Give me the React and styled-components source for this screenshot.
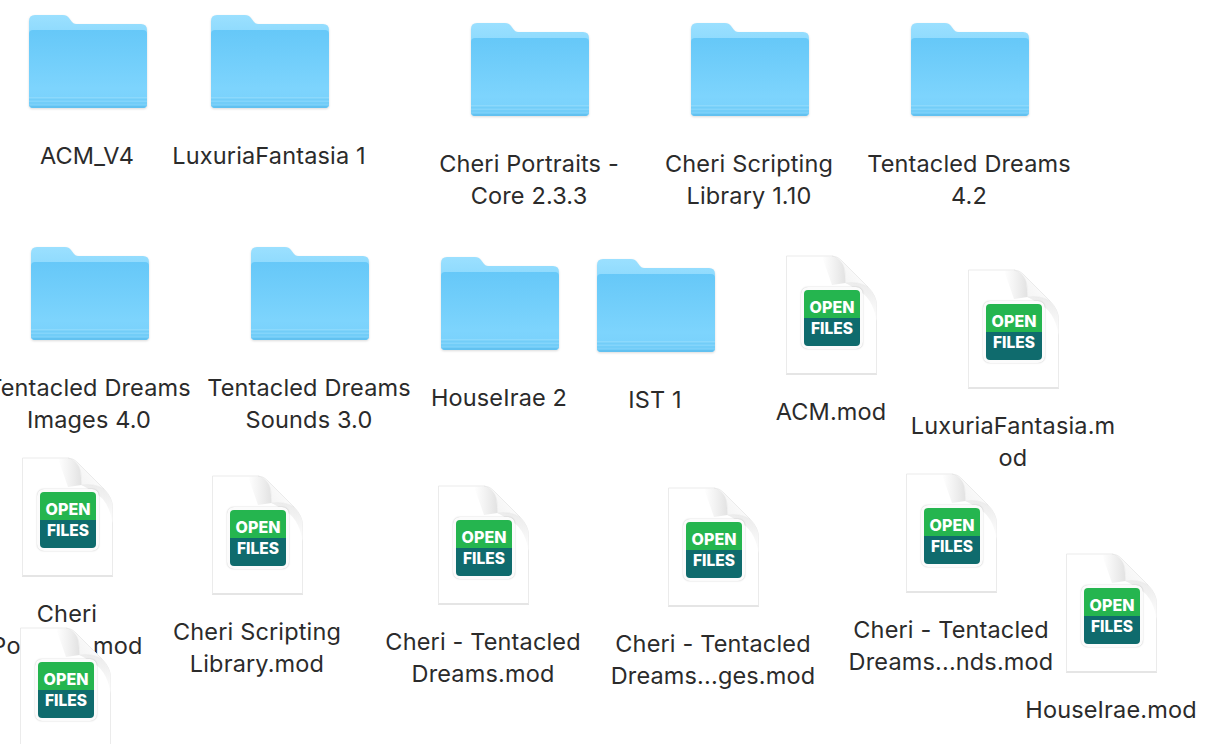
import React from 'react';
import styled, {createGlobalStyle} from 'styled-components';

const GlobalStyle = createGlobalStyle`
    html, body {
        margin: 0;
        padding: 0;
        background: #fff;
    }
`;

const Desktop = styled.main`
    position: relative;
    width: 1212px;
    height: 744px;
    overflow: hidden;
    background: #fff;
    font-family: Inter, "Liberation Sans", sans-serif;
`;
const Item = styled.div`
    position: absolute;
    left: ${({$center}) => $center - 130}px;
    top: ${({$top}) => $top}px;
    width: 260px;
    display: flex;
    flex-direction: column;
    align-items: center;
`;
const Label = styled.div`
    margin-top: ${({$gap}) => $gap}px;
    margin-right: ${({$shift}) => $shift}px;
    font-size: 23.5px;
    line-height: 32px;
    letter-spacing: 0.15px;
    color: #2b2b2b;
    text-align: center;
    white-space: nowrap;
`;
const FolderSvg = styled.svg`
    display: block;
    width: 118px;
    height: 94px;
    overflow: visible;
    filter: drop-shadow(0 1px 1px rgba(0, 0, 0, 0.14));
`;
const FileBox = styled.div`
    position: relative;
    width: 92px;
    height: 120px;
`;
const FileSvg = styled.svg`
    display: block;
    width: 92px;
    height: 120px;
    overflow: visible;
`;
const Badge = styled.div`
    position: absolute;
    left: 15px;
    top: 32px;
    width: 62px;
    height: 62px;
    box-sizing: border-box;
    padding: 3px;
    border-radius: 7px;
    background: #fbfbfb;
    box-shadow: 0 0 1.5px rgba(0, 0, 0, 0.25);
`;
const BadgeInner = styled.div`
    height: 100%;
    border-radius: 4px;
    overflow: hidden;
    display: grid;
    grid-template-rows: 1fr 1fr;
    font-weight: 800;
    color: #fff;
    text-align: center;
`;
const BadgeRow = styled.div`
    display: flex;
    justify-content: center;
    align-items: ${({$align}) => $align};
    padding: ${({$pad}) => $pad};
    background: ${({$bg}) => $bg};
    font-size: ${({$size}) => $size}px;
    line-height: 12px;
`;
const Defs = styled.svg`
    position: absolute;
    width: 0;
    height: 0;
`;

const SharedDefs = () => (
    <Defs aria-hidden="true">
        <defs>
            <linearGradient id="folderBack" x1="0" y1="0" x2="0" y2="1">
                <stop offset="0" stopColor="#9be0ff" />
                <stop offset="1" stopColor="#7fd3fb" />
            </linearGradient>
            <linearGradient id="folderFront" x1="0" y1="0" x2="0" y2="1">
                <stop offset="0" stopColor="#66c8f8" />
                <stop offset="0.75" stopColor="#7dd4fd" />
                <stop offset="1" stopColor="#78d0fb" />
            </linearGradient>
            <linearGradient id="fold" x1="0" y1="0.8" x2="1" y2="0.2">
                <stop offset="0" stopColor="#f1f1f1" />
                <stop offset="1" stopColor="#ffffff" />
            </linearGradient>
            <linearGradient id="pageShade" x1="0" y1="0" x2="1" y2="0">
                <stop offset="0" stopColor="#e6e6e6" stopOpacity="0" />
                <stop offset="1" stopColor="#e2e2e2" />
            </linearGradient>
            <linearGradient id="curl" x1="0.2" y1="0" x2="0.1" y2="1">
                <stop offset="0" stopColor="#ececec" />
                <stop offset="1" stopColor="#ffffff" />
            </linearGradient>
        </defs>
    </Defs>
);

const FolderIcon = () => (
    <FolderSvg viewBox="0 0 118 94">
        <path
            d="M0 6 Q0 0 6 0 H34 Q38 0 40 3 L43 7 Q44.500 9 47 9 H112 Q118 9 118 15 V40 H0 Z"
            fill="url(#folderBack)"
        />
        <path
            d="M0 89 V19 Q0 15 4 15 H114 Q118 15 118 19 V89 Q118 93 114 93 H4 Q0 93 0 89 Z"
            fill="url(#folderFront)"
        />
        <path d="M0 82 H118 V89 Q118 93 114 93 H4 Q0 93 0 89 Z" fill="#72cdf8" />
        <rect x="0" y="82" width="118" height="1.500" fill="#8cd9fc" />
        <rect x="0" y="85.500" width="118" height="1.500" fill="#84d5fb" />
        <rect x="0" y="89" width="118" height="1" fill="#7cd0f9" />
        <path d="M1 91 H117 Q116 93 114 93 H4 Q2 93 1 91 Z" fill="#62c1f0" />
    </FolderSvg>
);

const FileIcon = () => (
    <FileBox>
        <FileSvg viewBox="0 0 92 120">
            <path
                d="M0.500 1 H46 Q52 1.500 56 6 L82 32 Q90.500 41 90.500 50 V118.500 H0.500 Z"
                fill="#fff"
                stroke="#e6e6e6"
                strokeWidth="0.8"
            />
            <path d="M0 118.800 H91 V120 H0 Z" fill="#000" opacity="0.1" />
            <path d="M36 1.500 H46 Q57 4 58.500 14 L59.500 28 L46 30 Z" fill="url(#pageShade)" />
            <path
                d="M59.500 28 Q72 26 82 32 Q90.500 41 90.500 50 V66 Q87 42 70 34 Q65 31 59.500 28 Z"
                fill="url(#curl)"
            />
            <path
                d="M46 1 Q52 1.500 56 6 L82 32 Q72 26 59.500 28 Q60 16 57 10 Q53 3 46 1 Z"
                fill="url(#fold)"
                stroke="#e4e4e4"
                strokeWidth="0.5"
            />
        </FileSvg>
        <Badge>
            <BadgeInner>
                <BadgeRow $bg="#25b54f" $size={16} $align="flex-end" $pad="0 0 5px">OPEN</BadgeRow>
                <BadgeRow $bg="#0f6b6d" $size={15.5} $align="flex-start" $pad="5px 0 0">FILES</BadgeRow>
            </BadgeInner>
        </Badge>
    </FileBox>
);

const folders = [
    {center: 88, top: 15, lines: ['ACM_V4']},
    {center: 270, top: 15, lines: ['LuxuriaFantasia 1']},
    {center: 530, top: 23, lines: ['Cheri Portraits -', 'Core 2.3.3']},
    {center: 750, top: 23, lines: ['Cheri Scripting', 'Library 1.10']},
    {center: 970, top: 23, lines: ['Tentacled Dreams', '4.2']},
    {center: 90, top: 247, lines: ['Tentacled Dreams', 'Images 4.0']},
    {center: 310, top: 247, lines: ['Tentacled Dreams', 'Sounds 3.0']},
    {center: 500, top: 257, lines: ['HouseIrae 2']},
    {center: 656, top: 259, lines: ['IST 1']},
];

const files = [
    {center: 833, top: 255, lines: ['ACM.mod']},
    {center: 1015, top: 269, lines: ['LuxuriaFantasia.m', 'od']},
    {center: 69, top: 457, lines: ['Cheri', 'Portraits.mod']},
    {center: 259, top: 475, lines: ['Cheri Scripting', 'Library.mod']},
    {center: 485, top: 485, lines: ['Cheri - Tentacled', 'Dreams.mod']},
    {center: 715, top: 487, lines: ['Cheri - Tentacled', 'Dreams...ges.mod']},
    {center: 953, top: 473, lines: ['Cheri - Tentacled', 'Dreams...nds.mod']},
    {center: 1113, top: 553, lines: ['HouseIrae.mod']},
    {center: 67, top: 627, lines: ['Cheri.mod']},
];

const renderLines = (lines) => lines.map((line) => <div key={line}>{line}</div>);

export default function App() {
    return (
        <>
            <GlobalStyle />
            <SharedDefs />
            <Desktop>
                {folders.map((f) => (
                    <Item key={f.lines.join()} $center={f.center} $top={f.top}>
                        <FolderIcon />
                        <Label $gap={31} $shift={2}>{renderLines(f.lines)}</Label>
                    </Item>
                ))}
                {files.map((f) => (
                    <Item key={f.lines.join()} $center={f.center - 1} $top={f.top}>
                        <FileIcon />
                        <Label $gap={21} $shift={2}>{renderLines(f.lines)}</Label>
                    </Item>
                ))}
            </Desktop>
        </>
    );
}
